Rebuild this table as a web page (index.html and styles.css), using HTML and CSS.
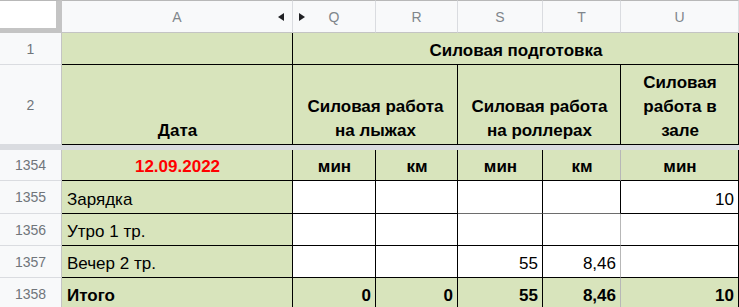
FILE: index.html
```html
<!DOCTYPE html>
<html lang="ru">
<head>
<meta charset="utf-8">
<title>Силовая подготовка</title>
<link rel="stylesheet" href="styles.css">
</head>
<body>
<div class="sheet">
  <div class="corner"></div>
  <div class="colhdr colhdr-a">A<svg class="arrow arrow-left" width="6" height="8" viewBox="0 0 6 8"><polygon points="6,0 6,8 0,4"/></svg></div>
  <div class="colhdr colhdr-q"><svg class="arrow arrow-right" width="6" height="8" viewBox="0 0 6 8"><polygon points="0,0 0,8 6,4"/></svg>Q</div>
  <div class="colhdr">R</div>
  <div class="colhdr">S</div>
  <div class="colhdr">T</div>
  <div class="colhdr">U</div>

  <div class="rowhdr">1</div>
  <div class="cell green"></div>
  <div class="cell green bold center span5">Силовая подготовка</div>

  <div class="rowhdr">2</div>
  <div class="cell green bold center">Дата</div>
  <div class="cell green bold center span2"><span>Силовая работа<br>на лыжах</span></div>
  <div class="cell green bold center span2"><span>Силовая работа<br>на роллерах</span></div>
  <div class="cell green bold center"><span>Силовая<br>работа в<br>зале</span></div>

  <div class="frozen-band"></div>

  <div class="rowhdr">1354</div>
  <div class="cell green bold center red">12.09.2022</div>
  <div class="cell green bold center">мин</div>
  <div class="cell green bold center">км</div>
  <div class="cell green bold center">мин</div>
  <div class="cell green bold center soft-right">км</div>
  <div class="cell green bold center">мин</div>

  <div class="rowhdr">1355</div>
  <div class="cell green">Зарядка</div>
  <div class="cell white"></div>
  <div class="cell white"></div>
  <div class="cell white soft-bottom"></div>
  <div class="cell white soft-bottom"></div>
  <div class="cell white right">10</div>

  <div class="rowhdr">1356</div>
  <div class="cell green">Утро 1 тр.</div>
  <div class="cell white"></div>
  <div class="cell white"></div>
  <div class="cell white"></div>
  <div class="cell white soft-right"></div>
  <div class="cell white"></div>

  <div class="rowhdr">1357</div>
  <div class="cell green">Вечер 2 тр.</div>
  <div class="cell white"></div>
  <div class="cell white"></div>
  <div class="cell white right">55</div>
  <div class="cell white right soft-right">8,46</div>
  <div class="cell white"></div>

  <div class="rowhdr">1358</div>
  <div class="cell green bold">Итого</div>
  <div class="cell green bold right">0</div>
  <div class="cell green bold right">0</div>
  <div class="cell green bold right">55</div>
  <div class="cell green bold right soft-right">8,46</div>
  <div class="cell green bold right">10</div>
</div>
</body>
</html>
```

FILE: styles.css
```css
html, body {
  margin: 0;
  padding: 0;
  background: #ffffff;
  overflow: hidden;
}

.sheet {
  display: grid;
  grid-template-columns: 62px 231px 83px 82px 85px 78px 118px;
  grid-template-rows: 33px 32px 80px 5px 31px 33px 32px 32px 32px;
  font-family: "Liberation Sans", Arial, sans-serif;
}

.corner {
  box-sizing: border-box;
  background: #ffffff;
  border-top: 1px solid #b8b8b8;
  border-right: 6px solid #c4c4c4;
  border-bottom: 5px solid #c4c4c4;
}

.colhdr {
  position: relative;
  box-sizing: border-box;
  display: flex;
  align-items: center;
  justify-content: center;
  background: #f8f9fa;
  border-top: 1px solid #b8b8b8;
  border-right: 1px solid #dadce0;
  border-bottom: 1px solid #c4c4c4;
  color: #80868b;
  font-size: 14px;
  padding-top: 1px;
}

.arrow {
  position: absolute;
  top: 12px;
  fill: #202124;
}

.arrow-left {
  right: 8px;
}

.arrow-right {
  left: 6px;
}

.rowhdr {
  box-sizing: border-box;
  display: flex;
  align-items: center;
  justify-content: center;
  background: #f8f9fa;
  border-right: 1px solid #c4c4c4;
  border-bottom: 1px solid #dadce0;
  color: #70757a;
  font-size: 14px;
}

.frozen-band {
  grid-column: 1 / -1;
  background: #dadce0;
}

.cell {
  box-sizing: border-box;
  display: flex;
  align-items: flex-end;
  justify-content: flex-start;
  padding: 0 4px 1px 5px;
  border-right: 1px solid #000000;
  border-bottom: 1px solid #000000;
  font-size: 17px;
  line-height: 24px;
  color: #000000;
  white-space: nowrap;
  overflow: hidden;
}

.green {
  background: #d8e4bc;
}

.white {
  background: #ffffff;
}

.bold {
  font-weight: bold;
}

.center {
  justify-content: center;
  text-align: center;
}

.right {
  justify-content: flex-end;
}

.red {
  color: #ff0000;
}

.span5 {
  grid-column: span 5;
}

.span2 {
  grid-column: span 2;
}

.soft-right {
  border-right-color: #b7b7b7;
}

.soft-bottom {
  border-bottom-color: #6d6d6d;
}
```
